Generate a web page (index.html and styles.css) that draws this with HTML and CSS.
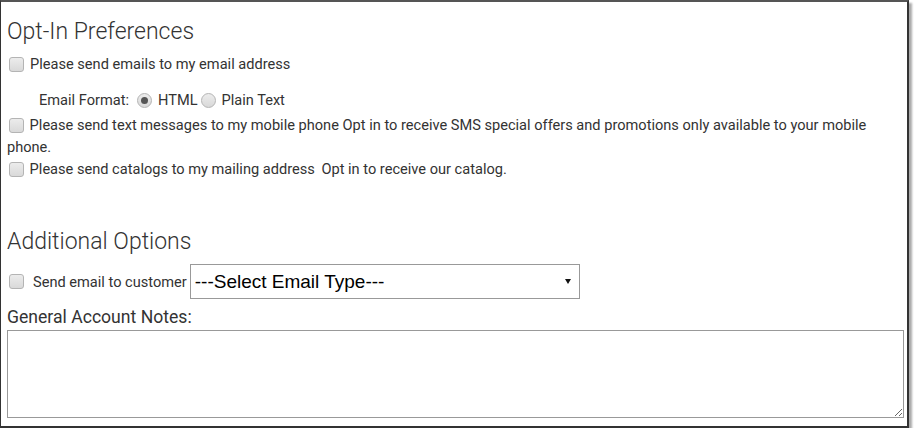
FILE: index.html
```html
<!DOCTYPE html>
<html lang="en">
<head>
<meta charset="utf-8">
<title>Opt-In Preferences</title>
<link rel="stylesheet" href="styles.css">
</head>
<body>
<div class="frame">
  <h2 class="section-title">Opt-In Preferences</h2>
  <div class="opt-row"><input type="checkbox" class="cb"><span>Please send emails to my email address</span></div>
  <div class="format-row">
    <span class="format-label">Email Format:</span>
    <input type="radio" class="rd" name="fmt" checked><span>HTML</span>
    <input type="radio" class="rd" name="fmt"><span>Plain Text</span>
  </div>
  <div class="opt-text first"><input type="checkbox" class="cb cb-inline"> Please send text messages to my mobile phone Opt in to receive SMS special offers and promotions only available to your mobile phone.</div>
  <div class="opt-text"><input type="checkbox" class="cb cb-inline"> Please send catalogs to my mailing address <span class="note">Opt in to receive our catalog.</span></div>

  <h2 class="section-title second">Additional Options</h2>
  <div class="send-row">
    <input type="checkbox" class="cb">
    <span class="send-label">Send email to customer</span>
    <span class="select-wrap">
      <select class="select"><option>---Select Email Type---</option></select>
    </span>
  </div>
  <div class="notes-label">General Account Notes:</div>
  <textarea class="notes"></textarea>
</div>
</body>
</html>
```
FILE: styles.css
```css
* { box-sizing: border-box; }
html, body { margin: 0; padding: 0; background: #fff; }
body { font-family: Roboto, "Liberation Sans", sans-serif; color: #333; }

.frame {
  width: 909px;
  height: 428px;
  border-left: 1px solid #333;
  border-top: 2px solid #555;
  border-right: 2px solid #333;
  border-bottom: 2px solid #333;
  box-shadow: 3px 3px 2px #aaa;
  padding: 16px 4px 0 6px;
  background: #fff;
}

.section-title {
  margin: 0;
  font-weight: 300;
  font-size: 23px;
  line-height: 28px;
  color: #333;
}
.section-title.second { margin-top: 48px; }

.cb {
  -webkit-appearance: none;
  appearance: none;
  width: 15px;
  height: 15px;
  margin: 0;
  border: 1px solid #b4b4b4;
  border-radius: 3px;
  background: linear-gradient(#ececec, #d9d9d9);
  flex: none;
}
.cb-inline { vertical-align: -3px; margin: 0 2px 0 2px; }

.opt-row {
  display: flex;
  align-items: center;
  gap: 6px;
  padding-left: 2px;
  font-size: 14.6px;
  line-height: 22px;
  margin-top: 7px;
}

.format-row {
  display: flex;
  align-items: center;
  font-size: 14.6px;
  line-height: 22px;
  padding-left: 32px;
  margin-top: 14px;
}
.format-label { margin-right: 5px; }
.rd {
  -webkit-appearance: none;
  appearance: none;
  width: 15px;
  height: 15px;
  margin: 0 6px 0 0;
  border: 1px solid #b4b4b4;
  border-radius: 50%;
  background: linear-gradient(#ececec, #d9d9d9);
  position: relative;
  flex: none;
}
.rd:checked::after {
  content: "";
  position: absolute;
  left: 3px; top: 3px;
  width: 7px; height: 7px;
  border-radius: 50%;
  background: #555;
}
.format-row span + .rd { margin-left: 3px; }

.opt-text {
  font-size: 14.6px;
  line-height: 22px;
}
.opt-text.first { margin-top: 3px; }
.opt-text .note { margin-left: 3px; }

.send-row {
  display: flex;
  align-items: center;
  margin-top: 8px;
  padding-left: 2px;
}
.send-label { font-size: 14.6px; margin-left: 9px; margin-right: 3px; }
.select-wrap { position: relative; display: inline-block; }
.select-wrap::after {
  content: "";
  position: absolute;
  right: 9px;
  top: 15px;
  border-left: 3px solid transparent;
  border-right: 3px solid transparent;
  border-top: 5px solid #111;
  pointer-events: none;
}
.select {
  -webkit-appearance: none;
  appearance: none;
  width: 390px;
  height: 35px;
  border: 1px solid #999;
  border-radius: 0;
  background: #fff;
  font-family: "Liberation Sans", Arial, sans-serif;
  font-size: 19px;
  color: #000;
  padding: 0 4px;
  margin: 0;
}

.notes-label {
  font-size: 17.6px;
  line-height: 20px;
  margin-top: 8px;
}
.notes {
  display: block;
  width: 897px;
  height: 88px;
  margin-top: 3px;
  border: 1px solid #999;
  resize: both;
}
```
